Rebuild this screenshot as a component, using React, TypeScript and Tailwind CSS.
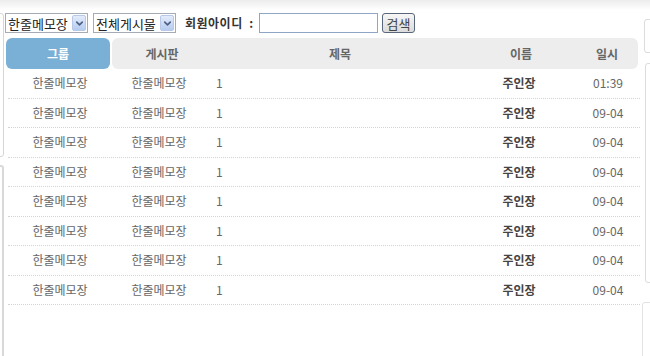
import { ChevronDown } from "lucide-react";

const rows = [
  { group: "한줄메모장", board: "한줄메모장", title: "1", name: "주인장", date: "01:39" },
  { group: "한줄메모장", board: "한줄메모장", title: "1", name: "주인장", date: "09-04" },
  { group: "한줄메모장", board: "한줄메모장", title: "1", name: "주인장", date: "09-04" },
  { group: "한줄메모장", board: "한줄메모장", title: "1", name: "주인장", date: "09-04" },
  { group: "한줄메모장", board: "한줄메모장", title: "1", name: "주인장", date: "09-04" },
  { group: "한줄메모장", board: "한줄메모장", title: "1", name: "주인장", date: "09-04" },
  { group: "한줄메모장", board: "한줄메모장", title: "1", name: "주인장", date: "09-04" },
  { group: "한줄메모장", board: "한줄메모장", title: "1", name: "주인장", date: "09-04" },
];

function FakeSelect({ label, width }: { label: string; width: string }) {
  return (
    <div className={`flex items-center h-[20px] border border-[#a5acb5] bg-white pl-[2px] pr-[1px] ${width}`}>
      <span className="flex-1 text-[13px] text-[#222] leading-none whitespace-nowrap">{label}</span>
      <span className="flex items-center justify-center w-[14px] h-[16px] rounded-[2px] bg-gradient-to-b from-[#e3ecfb] to-[#b6cbef] border border-[#b7c8e8]">
        <ChevronDown size={11} strokeWidth={3.5} className="text-[#4d6185]" />
      </span>
    </div>
  );
}

export default function App() {
  return (
    <div
      className="relative w-[650px] h-[356px] overflow-hidden bg-white text-[#666]"
      style={{ fontFamily: '"Noto Sans CJK KR", "Liberation Sans", sans-serif' }}
    >
      {/* page panels behind the frame */}
      <div className="absolute left-0 top-0 w-full h-[10px] bg-gradient-to-b from-[#ececec] to-white" />
      <div className="absolute left-[-10px] top-[13px] w-[14px] h-[144px] border border-[#d6d6d6] rounded-[3px]" />
      <div className="absolute left-[-10px] top-[165px] w-[14px] h-[200px] border-2 border-[#d9d9d9] rounded-[3px]" />
      <div className="absolute left-[644px] top-[19px] w-[20px] h-[34px] border border-[#dcdcdc] rounded-[3px]" />
      <div className="absolute left-[645px] top-[63px] w-[20px] h-[220px] border border-[#dcdcdc] rounded-[3px]" />
      <div className="absolute left-[642px] top-[302px] w-[20px] h-[70px] border border-[#e2e2e2] rounded-[3px]" />

      <div className="relative pl-[5px] pr-[12px] pt-[13px]">
        {/* search bar */}
        <div className="flex items-center h-[20px]">
          <FakeSelect label="한줄메모장" width="w-[83px]" />
          <div className="w-[5px]" />
          <FakeSelect label="전체게시물" width="w-[83px]" />
          <span className="ml-[9px] w-[71px] text-[12px] font-bold text-[#333] whitespace-nowrap tracking-[0.5px]">
            회원아이디 &nbsp;:
          </span>
          <div className="ml-[3px] w-[119px] h-[20px] border border-[#8fa6c4] bg-white" />
          <button className="ml-[4px] w-[33px] h-[20px] text-[13px] leading-none text-[#444] border border-[#59677a] rounded-[3px] bg-gradient-to-b from-[#f6f6f6] to-[#dcdcdc]">
            검색
          </button>
        </div>

        {/* header */}
        <div className="flex mt-[5px] h-[31px] text-[12px] font-bold">
          <div className="w-[104px] ml-[1px] flex items-center justify-center rounded-[6px] bg-[#7aafd6] text-white">
            그룹
          </div>
          <div className="flex-1 ml-[2px] flex items-center rounded-[6px] bg-[#ededed] text-[#666]">
            <span className="w-[100px] text-center">게시판</span>
            <span className="flex-1 text-center">제목</span>
            <span className="w-[100px] text-center pl-[6px]">이름</span>
            <span className="w-[70px] text-center pl-[8px]">일시</span>
          </div>
        </div>

        {/* rows */}
        <div className="ml-[3px] mr-[-2px]">
          {rows.map((r, i) => (
            <div
              key={i}
              className="flex items-center h-[29.5px] text-[12px] border-b border-dotted border-[#d4d4d4]"
            >
              <span className="w-[104px] text-center">{r.group}</span>
              <span className="w-[100px] text-center pr-[6px]">{r.board}</span>
              <span className="flex-1 pl-[4px]">{r.title}</span>
              <span className="w-[100px] text-center font-bold text-[#444] pr-[2px]">{r.name}</span>
              <span className="w-[70px] text-center pl-[6px]">{r.date}</span>
            </div>
          ))}
        </div>
      </div>
    </div>
  );
}
